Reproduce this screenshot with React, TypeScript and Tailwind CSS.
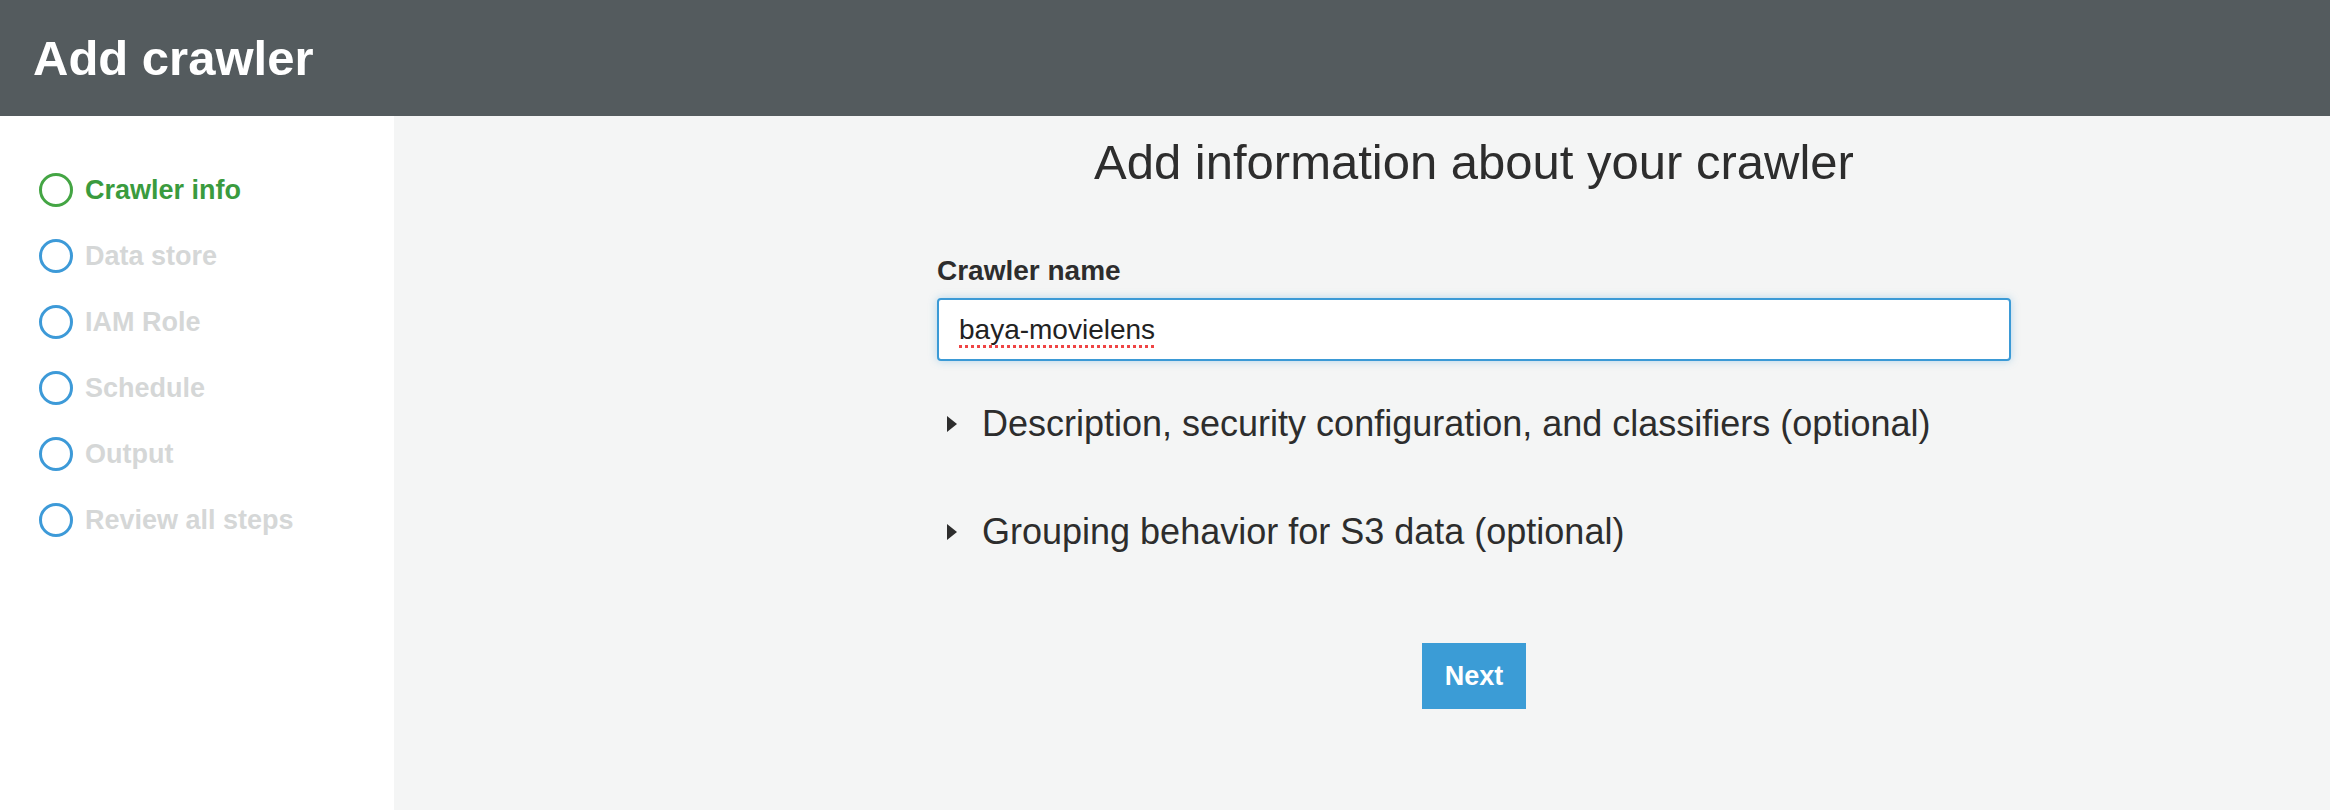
const STEPS = [
  { label: 'Crawler info', active: true },
  { label: 'Data store', active: false },
  { label: 'IAM Role', active: false },
  { label: 'Schedule', active: false },
  { label: 'Output', active: false },
  { label: 'Review all steps', active: false },
];

const SECTIONS = [
  'Description, security configuration, and classifiers (optional)',
  'Grouping behavior for S3 data (optional)',
];

function Caret() {
  return (
    <svg width="10" height="16" viewBox="0 0 10 16" className="shrink-0">
      <path d="M0 0 L10 8 L0 16 Z" fill="#2d2d2d" />
    </svg>
  );
}

export default function App() {
  return (
    <div className="h-[810px] flex flex-col text-[#333]" style={{ fontFamily: '"Liberation Sans", Arial, Helvetica, sans-serif' }}>
      {/* header */}
      <header className="h-[116px] shrink-0 bg-[#545b5e] flex items-center pl-[33px]">
        <h1 className="text-white font-bold text-[49px] leading-[49px]">Add crawler</h1>
      </header>

      <div className="flex flex-1 min-h-0">
        {/* steps */}
        <nav className="w-[394px] shrink-0 bg-white pt-[57px] pl-[39px]">
          <ul className="flex flex-col gap-[32px]">
            {STEPS.map((step) => (
              <li key={step.label} className="flex items-center gap-[12px] h-[34px]">
                <span
                  className={
                    step.active
                      ? 'w-[34px] h-[34px] rounded-full border-[3px] border-[#44a544] shrink-0'
                      : 'w-[34px] h-[34px] rounded-full border-[3px] border-[#3d9ad8] shrink-0'
                  }
                />
                <span
                  className={
                    step.active
                      ? 'text-[27px] leading-[27px] font-bold text-[#3a9b3e]'
                      : 'text-[27px] leading-[27px] font-bold text-[#d5d7d7]'
                  }
                >
                  {step.label}
                </span>
              </li>
            ))}
          </ul>
        </nav>

        {/* form */}
        <main className="flex-1 bg-[#f4f5f5]">
          <div className="ml-[543px] w-[1074px] flex flex-col pt-[22px]">
            <h2 className="text-center text-[49px] leading-[49px] text-[#2d2d2d]">Add information about your crawler</h2>

            <label className="mt-[70px] text-[28px] leading-[28px] font-bold text-[#2d2d2d]">Crawler name</label>
            <div className="mt-[13px] h-[63px] bg-white border-2 border-[#3b9ad6] rounded-[4px] shadow-[0_0_9px_rgba(59,154,214,0.35)] flex items-center pl-[20px]">
              <span className="text-[28px] leading-[28px] text-[#222] underline decoration-dotted decoration-[#ef4444] decoration-[3px] underline-offset-[6px]">
                baya-movielens
              </span>
            </div>

            <div className="mt-[45px] flex flex-col gap-[72px]">
              {SECTIONS.map((s) => (
                <div key={s} className="flex items-center gap-[25px] pl-[10px] h-[36px]">
                  <Caret />
                  <span className="text-[36px] leading-[36px] text-[#2d2d2d]">{s}</span>
                </div>
              ))}
            </div>

            <div className="mt-[93px] flex justify-center">
              <button className="w-[104px] h-[66px] bg-[#3b9cd6] text-white font-bold text-[27px]">Next</button>
            </div>
          </div>
        </main>
      </div>
    </div>
  );
}
